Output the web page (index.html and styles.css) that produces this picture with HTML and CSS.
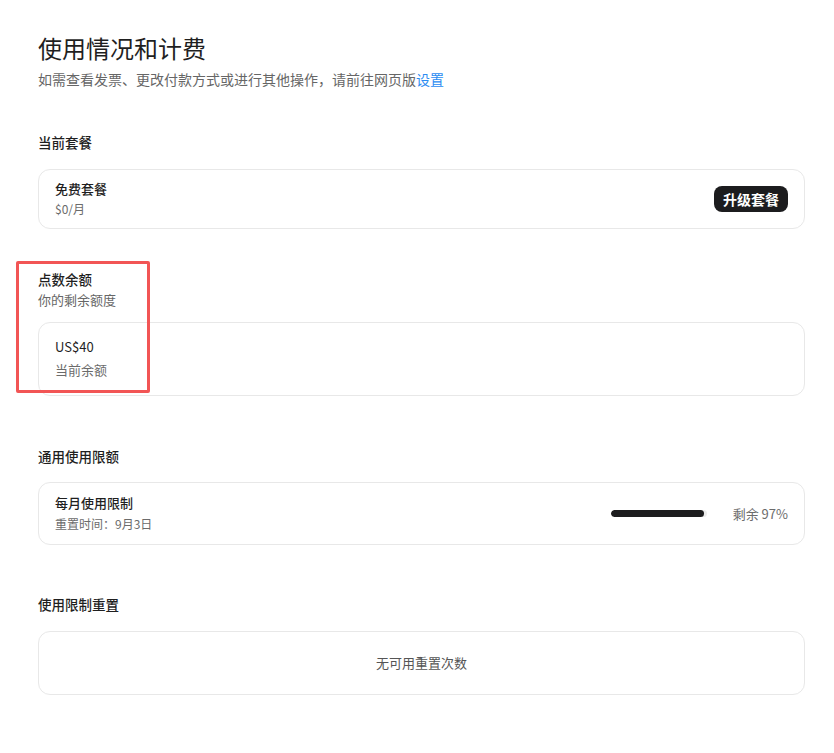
FILE: index.html
```html
<!DOCTYPE html>
<html lang="zh-CN">
<head>
    <meta charset="UTF-8">
    <title>使用情况和计费</title>
    <link rel="stylesheet" href="styles.css">
</head>
<body>
<div class="page">
    <h1 class="page-title">使用情况和计费</h1>
    <p class="page-desc">如需查看发票、更改付款方式或进行其他操作，请前往网页版<a href="#" class="link">设置</a></p>

    <!-- 当前套餐 -->
    <div class="section section-plan">
        <div class="section-title">当前套餐</div>
        <div class="card card-row">
            <div class="card-text">
                <div class="card-name">免费套餐</div>
                <div class="card-sub">$0/月</div>
            </div>
            <div class="btn-dark">升级套餐</div>
        </div>
    </div>

    <!-- 点数余额 -->
    <div class="section section-credit">
        <div class="mark-box"></div>
        <div class="section-title">点数余额</div>
        <div class="section-desc">你的剩余额度</div>
        <div class="card card-credit">
            <div class="card-amount">US$40</div>
            <div class="card-sub card-sub-lg">当前余额</div>
        </div>
    </div>

    <!-- 通用使用限额 -->
    <div class="section section-limit">
        <div class="section-title">通用使用限额</div>
        <div class="card card-row card-limit">
            <div class="card-text">
                <div class="card-name">每月使用限制</div>
                <div class="card-sub card-sub-tall">重置时间：9月3日</div>
            </div>
            <div class="usage">
                <div class="bar"><div class="bar-fill" style="width: 97%"></div></div>
                <span class="usage-text">剩余 97%</span>
            </div>
        </div>
    </div>

    <!-- 使用限制重置 -->
    <div class="section section-reset">
        <div class="section-title">使用限制重置</div>
        <div class="card card-empty">无可用重置次数</div>
    </div>
</div>
</body>
</html>
```

FILE: styles.css
```css
body{
    margin: 0;
    background-color: #fff;
    color: #1f1f1f;
    font-family: "Noto Sans CJK SC", "Noto Sans", sans-serif;
}
.page{
    padding: 32px 29px 40px 38px;
}
.page-title{
    margin: 0;
    font-size: 24px;
    line-height: 32px;
    font-weight: 400;
}
.page-desc{
    margin: 5px 0 0;
    font-size: 14px;
    line-height: 20px;
    color: #666;
}
.link{
    color: #2b8cf2;
    text-decoration: none;
}
.section{
    position: relative;
}
.section-plan{
    margin-top: 43px;
}
.section-credit{
    margin-top: 40px;
}
.section-limit{
    margin-top: 50px;
}
.section-reset{
    margin-top: 49px;
}
.section-title{
    font-size: 13.5px;
    line-height: 20px;
    font-weight: 500;
}
.section-desc{
    margin-top: 1px;
    font-size: 13px;
    line-height: 20px;
    color: #666;
}
.card{
    margin-top: 17px;
    border: 1px solid #e8e8e8;
    border-radius: 12px;
    padding: 9px 16px;
}
.card-row{
    display: flex;
    align-items: center;
    justify-content: space-between;
}
.card-limit{
    margin-top: 16px;
    padding: 10px 16px;
}
.card-name{
    font-size: 13px;
    line-height: 20px;
    font-weight: 500;
}
.card-sub{
    font-size: 12px;
    line-height: 20px;
    color: #6b6b6b;
}
.card-sub-tall{
    line-height: 21px;
}
.card-sub-lg{
    margin-top: 2px;
    font-size: 13px;
    line-height: 22px;
}
.btn-dark{
    padding: 0 9px;
    height: 26px;
    line-height: 26px;
    border-radius: 8px;
    background-color: #1c1c1e;
    color: #fff;
    font-size: 14px;
    font-weight: 700;
    cursor: pointer;
}
.card-credit{
    margin-top: 12px;
    padding: 14px 16px;
}
.card-amount{
    font-size: 13px;
    line-height: 20px;
}
.usage{
    display: flex;
    align-items: center;
    gap: 26px;
}
.bar{
    width: 96px;
    height: 7px;
    border-radius: 4px;
    background-color: #ececec;
    overflow: hidden;
}
.bar-fill{
    height: 100%;
    border-radius: 4px;
    background-color: #1c1c1e;
}
.usage-text{
    font-size: 13px;
    line-height: 20px;
    color: #6b6b6b;
}
.card-empty{
    padding: 21px 16px;
    text-align: center;
    font-size: 13px;
    line-height: 20px;
    color: #555;
}
/* 高亮框 */
.mark-box{
    position: absolute;
    left: -22px;
    top: -8px;
    width: 128px;
    height: 126px;
    border: 3px solid #f25555;
    border-radius: 2px;
    pointer-events: none;
}
```
